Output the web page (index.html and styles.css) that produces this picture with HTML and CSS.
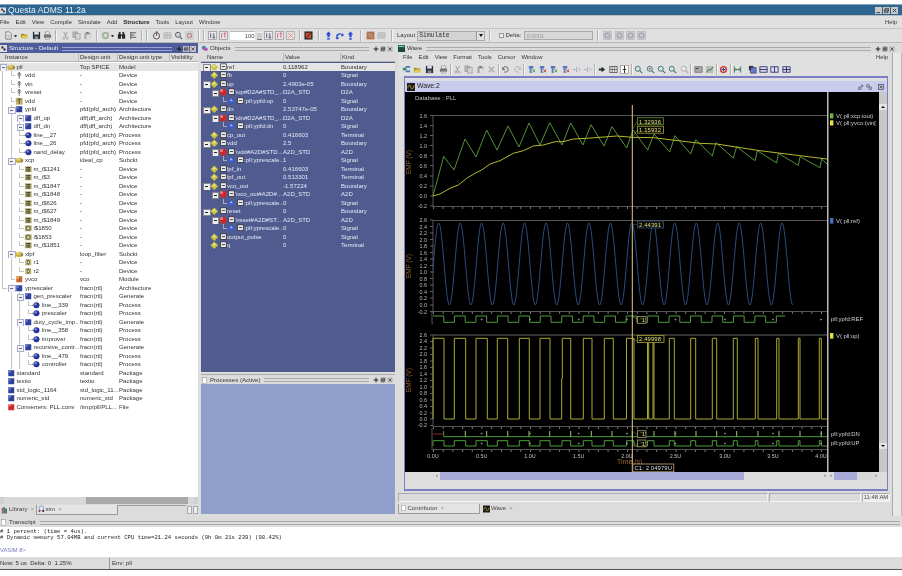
FILE: index.html
```html
<!DOCTYPE html>
<html lang="en">
<head>
<meta charset="utf-8">
<title>Questa ADMS 11.2a</title>
<link rel="stylesheet" href="styles.css">
</head>
<body>
<svg class="sprite" aria-hidden="true">
<defs>
<symbol id="chip" viewBox="0 0 10 10"><ellipse cx="5" cy="5.2" rx="4.6" ry="3" fill="#c9b13e"/><ellipse cx="4" cy="4" rx="2.4" ry="1.3" fill="#e6d678"/><rect x="7" y="4" width="2.6" height="3" fill="#8b8b70"/></symbol>
<symbol id="arch" viewBox="0 0 10 10"><rect x="1.5" y="1.5" width="7" height="7" fill="#2f3f9c"/><rect x="1.5" y="1.5" width="3" height="3" fill="#6b78c4"/></symbol>
<symbol id="ball" viewBox="0 0 10 10"><circle cx="5.2" cy="5" r="3.6" fill="#24349a"/><circle cx="4.2" cy="3.8" r="1.4" fill="#7c88d4"/><rect x="0" y="4.5" width="2" height="1" fill="#666"/></symbol>
<symbol id="dev" viewBox="0 0 10 10"><path d="M5 2v7M3 4l2-2.5L7 4M3.4 5h3.2" fill="none" stroke="#555" stroke-width="1"/></symbol>
<symbol id="devb" viewBox="0 0 10 10"><rect x="1" y="1" width="8" height="8" fill="#bcb26a"/><path d="M5 2v6M3 4l2-2 2 2" fill="none" stroke="#443" stroke-width="1"/></symbol>
<symbol id="mos" viewBox="0 0 10 10"><rect x="1" y="1.5" width="8" height="7" fill="#b8b070"/><path d="M2.5 3h5M2.5 5h3M2.5 7h5M6 3v4" stroke="#333" stroke-width="1"/></symbol>
<symbol id="src" viewBox="0 0 10 10"><rect x="1" y="1.5" width="8" height="7" fill="#b8b070"/><circle cx="5" cy="5" r="2.3" fill="#d8d0a0" stroke="#333" stroke-width=".9"/></symbol>
<symbol id="res" viewBox="0 0 10 10"><rect x="1.5" y="1.5" width="7" height="7" fill="#bcb26a"/><path d="M5 2v1.5M5 6.5V8" stroke="#333"/><rect x="3.8" y="3.5" width="2.4" height="3" fill="#eee" stroke="#333" stroke-width=".6"/></symbol>
<symbol id="mod" viewBox="0 0 10 10"><rect x="1.5" y="1.5" width="7" height="7" fill="#c8642a"/><rect x="1.5" y="1.5" width="3" height="3" fill="#e8b060"/></symbol>
<symbol id="file" viewBox="0 0 10 10"><rect x="1.5" y="1.5" width="7" height="7" fill="#d62a2a"/><rect x="1.5" y="1.5" width="3" height="2" fill="#f08a7a"/></symbol>
<symbol id="dia" viewBox="0 0 10 10"><path d="M5 .5 9.5 5 5 9.5 .5 5z" fill="#c8c040"/><path d="M5 2 7 5H3z" fill="#f0ec9a"/></symbol>
<symbol id="diab" viewBox="0 0 10 10"><path d="M5 .5 9.5 5 5 9.5 .5 5z" fill="#3a5ad0"/><path d="M5 2 7 5H3z" fill="#9ab4f0"/></symbol>
<symbol id="red" viewBox="0 0 10 10"><rect x="1.5" y="1.5" width="7" height="7" fill="#d62424"/><rect x="1.5" y="1.5" width="3" height="3" fill="#ee8a8a"/></symbol>
<symbol id="sq" viewBox="0 0 10 10"><rect x="2" y="1" width="6.5" height="6.5" fill="#eee" stroke="#222" stroke-width=".8"/><path d="M3.5 4.2h3.5" stroke="#222" stroke-width="1"/></symbol>
<symbol id="doc" viewBox="0 0 10 10"><path d="M2 1h4l2 2v6H2z" fill="#f4f4f4" stroke="#555" stroke-width=".8"/><path d="M3.5 4.5h3M3.5 6.5h3" stroke="#777" stroke-width=".7"/></symbol>
<symbol id="open" viewBox="0 0 10 10"><path d="M1 3h3l1 1h3v4H1z" fill="#a09030"/><path d="M1 8l1.5-3H9.5L8 8z" fill="#e0c850"/></symbol>
<symbol id="save" viewBox="0 0 10 10"><rect x="1" y="1" width="8" height="8" fill="#2a3038"/><rect x="2.5" y="1" width="5" height="3" fill="#dde"/><rect x="3" y="6" width="4" height="3" fill="#889"/></symbol>
<symbol id="print" viewBox="0 0 10 10"><rect x="3" y="1" width="4" height="3" fill="#eee" stroke="#777" stroke-width=".6"/><rect x="1" y="4" width="8" height="3.5" fill="#777"/><rect x="2.5" y="7" width="5" height="2" fill="#ddd" stroke="#777" stroke-width=".5"/></symbol>
<symbol id="cut" viewBox="0 0 10 10"><path d="M3 1l3 6M7 1 4 7" stroke="#999" fill="none"/><circle cx="3.2" cy="8" r="1.2" fill="none" stroke="#aaa"/><circle cx="6.8" cy="8" r="1.2" fill="none" stroke="#aaa"/></symbol>
<symbol id="copy" viewBox="0 0 10 10"><rect x="1" y="1" width="5" height="6" fill="#bbb" stroke="#888" stroke-width=".6"/><rect x="4" y="3" width="5" height="6" fill="#d4d4d4" stroke="#888" stroke-width=".6"/></symbol>
<symbol id="paste" viewBox="0 0 10 10"><rect x="1.5" y="2" width="7" height="7" fill="#aaa"/><rect x="3.5" y="1" width="3" height="2" fill="#777"/><rect x="4" y="4" width="4.5" height="5" fill="#ddd"/></symbol>
<symbol id="x" viewBox="0 0 10 10"><path d="M2 2l6 6M8 2l-6 6" stroke="#aaa" stroke-width="1.4"/></symbol>
<symbol id="go" viewBox="0 0 10 10"><circle cx="5" cy="5" r="3.8" fill="#a8c0a0" stroke="#999" stroke-width=".6"/><circle cx="5" cy="5" r="1.6" fill="#dce8d8"/></symbol>
<symbol id="find" viewBox="0 0 10 10"><rect x="1" y="3.5" width="3.4" height="5" fill="#222"/><rect x="5.6" y="3.5" width="3.4" height="5" fill="#222"/><rect x="2" y="1" width="2" height="3" fill="#333"/><rect x="6" y="1" width="2" height="3" fill="#333"/><rect x="4" y="4" width="2" height="1.5" fill="#333"/></symbol>
<symbol id="list" viewBox="0 0 10 10"><path d="M2 1v8M2 2h6M2 4.5h4M2 7h6" stroke="#555" stroke-width="1"/></symbol>
<symbol id="clock" viewBox="0 0 10 10"><circle cx="5" cy="5.5" r="3.4" fill="#e4e4e4" stroke="#444"/><path d="M5 5.5V3" stroke="#a33"/><rect x="4" y=".5" width="2" height="1.5" fill="#444"/></symbol>
<symbol id="ghost" viewBox="0 0 10 10"><rect x="1" y="2" width="8" height="6" fill="#d0d0d0" stroke="#aaa" stroke-width=".6"/><path d="M2.5 2v6M5 2v6M7.5 2v6M1 5h8" stroke="#aaa" stroke-width=".5"/></symbol>
<symbol id="lens" viewBox="0 0 10 10"><circle cx="4.4" cy="4.2" r="2.8" fill="#cfd3dc" stroke="#555"/><path d="M6.5 6.5l2.6 2.6" stroke="#555" stroke-width="1.2"/></symbol>
<symbol id="lensr" viewBox="0 0 10 10"><rect x="1" y="1" width="8" height="8" fill="#d8d8d8" stroke="#aaa" stroke-width=".5"/><path d="M3 3h4v4H3z" fill="none" stroke="#b07070"/></symbol>
<symbol id="tb1" viewBox="0 0 10 10"><rect x=".5" y=".5" width="9" height="9" fill="#e8e8f0" stroke="#888" stroke-width=".7"/><path d="M3 2.5v5M6.5 2.5v5M5 7l1.5 1L8 7" stroke="#335" fill="none" stroke-width=".9"/></symbol>
<symbol id="tb2" viewBox="0 0 10 10"><rect x=".5" y=".5" width="9" height="9" fill="#e8e8f0" stroke="#888" stroke-width=".7"/><path d="M3 2.5v5M6.5 2.5v5M5 3l1.5-1L8 3" stroke="#c44" fill="none" stroke-width=".9"/></symbol>
<symbol id="tb3" viewBox="0 0 10 10"><rect x=".5" y=".5" width="9" height="9" fill="#e8e0e0" stroke="#999" stroke-width=".7"/><path d="M2.5 2.5l5 5M7.5 2.5l-5 5" stroke="#c88" stroke-width=".9"/></symbol>
<symbol id="stop" viewBox="0 0 10 10"><rect x=".5" y=".5" width="9" height="9" fill="#2a2a2a"/><rect x="2" y="2" width="6" height="6" fill="#d24a24"/><path d="M2.5 8l5-6" stroke="#222"/></symbol>
<symbol id="aup" viewBox="0 0 10 10"><path d="M5 .5 8 4H6.3v3H3.7V4H2z" fill="#2a4ad8"/><rect x="3.5" y="8" width="3" height="1.6" fill="#2a4ad8"/></symbol>
<symbol id="aov" viewBox="0 0 10 10"><path d="M1 6a4 4 0 0 1 7-2V2l2 3-3 1.5L7.5 5A2.5 2.5 0 0 0 3 7z" fill="#2a4ad8"/><rect x="1" y="7" width="3" height="2" fill="#2a4ad8"/></symbol>
<symbol id="ostop" viewBox="0 0 10 10"><rect x=".5" y=".5" width="9" height="9" fill="#c89070"/><path d="M2 8l6-6" stroke="#888" stroke-width="1.2"/><rect x="2" y="2" width="6" height="6" fill="none" stroke="#b06030"/></symbol>
<symbol id="gear" viewBox="0 0 10 10"><rect x=".5" y=".5" width="9" height="9" fill="#c8c8d0" stroke="#aaa" stroke-width=".5"/><circle cx="5" cy="5" r="2.6" fill="none" stroke="#8a8f98" stroke-width="1.3" stroke-dasharray="1.2 .6"/></symbol>
<symbol id="wblue" viewBox="0 0 10 10"><rect x="1" y="3" width="4" height="3" fill="#3a8a70"/><path d="M4 1h5v2H4zM4 6h5v2H4z" fill="#4a78b8"/></symbol>
<symbol id="addw" viewBox="0 0 10 10"><path d="M2 1h5v3H5v5H3V4H2z" fill="#5a78c0"/><path d="M6 5l3 3M9 5 6 8" stroke="#38a038" stroke-width="1.1"/></symbol>
<symbol id="delw" viewBox="0 0 10 10"><path d="M2 1h5v3H5v5H3V4H2z" fill="#5a78c0"/><path d="M6 5l3 3M9 5 6 8" stroke="#c83030" stroke-width="1.1"/></symbol>
<symbol id="gstep" viewBox="0 0 10 10"><path d="M1 5h4M5 2v6M7 3l2 2-2 2" stroke="#aab" fill="none" stroke-width="1"/></symbol>
<symbol id="undo" viewBox="0 0 10 10"><path d="M2 5a3 3 0 1 1 1.5 2.5M2 2.5V5h2.5" fill="none" stroke="#556" stroke-width="1"/></symbol>
<symbol id="redo" viewBox="0 0 10 10"><path d="M8 5a3 3 0 1 0-1.5 2.5M8 2.5V5H5.5" fill="none" stroke="#aab" stroke-width="1"/></symbol>
<symbol id="run" viewBox="0 0 10 10"><path d="M1 4h3V2l4 3-4 3V6H1z" fill="#1f3030"/></symbol>
<symbol id="grid" viewBox="0 0 10 10"><rect x="1" y="1.5" width="8" height="7" fill="#eee" stroke="#444" stroke-width=".8"/><path d="M3.6 1.5v7M6.3 1.5v7M1 5h8" stroke="#444" stroke-width=".7"/></symbol>
<symbol id="curs" viewBox="0 0 10 10"><rect x=".5" y=".5" width="9" height="9" fill="#fff" stroke="#987" stroke-width=".7"/><path d="M5 1v8M3 5h4" stroke="#222"/></symbol>
<symbol id="zoom" viewBox="0 0 10 10"><circle cx="4.2" cy="4.2" r="2.8" fill="#cfe0ea" stroke="#3f6f6a"/><path d="M6.3 6.3l2.8 2.8" stroke="#3f6f6a" stroke-width="1.2"/></symbol>
<symbol id="zoomp" viewBox="0 0 10 10"><circle cx="4.2" cy="4.2" r="2.8" fill="#cfe0ea" stroke="#3f6f6a"/><path d="M6.3 6.3l2.8 2.8" stroke="#3f6f6a" stroke-width="1.2"/><path d="M3 4.2h2.4M4.2 3v2.4" stroke="#a33" stroke-width=".7"/></symbol>
<symbol id="zoomg" viewBox="0 0 10 10"><circle cx="4.2" cy="4.2" r="2.8" fill="#e8e8e8" stroke="#aaa"/><path d="M6.3 6.3l2.8 2.8" stroke="#aaa" stroke-width="1.2"/></symbol>
<symbol id="card" viewBox="0 0 10 10"><rect x="1" y="2" width="8" height="6" fill="#aaa" stroke="#555" stroke-width=".7"/><path d="M2 4h3" stroke="#333"/></symbol>
<symbol id="graph" viewBox="0 0 10 10"><rect x="1" y="1" width="8" height="8" fill="#b8c0a8"/><path d="M2 8l2-3 2 1 3-4" stroke="#2a5a9a" fill="none"/></symbol>
<symbol id="cyc" viewBox="0 0 10 10"><circle cx="5" cy="5" r="3.2" fill="none" stroke="#d03020" stroke-width="1.5"/><path d="M5 3v4M3 5h4" stroke="#2a3a9a" stroke-width="1.1"/></symbol>
<symbol id="hw" viewBox="0 0 10 10"><path d="M1.5 1.5v7M8.5 1.5v7M2.5 5h5M3.5 3.5 2 5l1.5 1.5M6.5 3.5 8 5 6.5 6.5" stroke="#2a6a4a" fill="none" stroke-width=".9"/></symbol>
<symbol id="wa" viewBox="0 0 10 10"><rect x="1" y="1" width="5" height="5" fill="#335" /><rect x="3" y="3" width="6" height="6" fill="#6a78d0" stroke="#224" stroke-width=".6"/></symbol>
<symbol id="wb" viewBox="0 0 10 10"><rect x="1" y="2" width="8" height="6" fill="#dde" stroke="#226" stroke-width=".9"/><path d="M1 5h8" stroke="#226"/></symbol>
<symbol id="wc" viewBox="0 0 10 10"><rect x="1" y="2" width="8" height="6" fill="#dde" stroke="#226" stroke-width=".9"/><path d="M5 2v6" stroke="#226"/></symbol>
<symbol id="wd" viewBox="0 0 10 10"><rect x="1" y="2" width="8" height="6" fill="#dde" stroke="#226" stroke-width=".9"/><path d="M5 2v6M1 5h8" stroke="#226"/></symbol>
<symbol id="waveic" viewBox="0 0 10 10"><rect width="10" height="10" fill="#1c1c1c"/><path d="M1 6c2-6 3-3 4 0s3 1 4-3" fill="none" stroke="#d8b020"/></symbol>
<symbol id="wicon" viewBox="0 0 10 10"><rect width="10" height="10" fill="#204838"/><rect x="1" y="1" width="8" height="2" fill="#7ad0a0"/></symbol>
<symbol id="obj" viewBox="0 0 10 10"><circle cx="4" cy="4" r="3" fill="#3c8ab0"/><circle cx="7" cy="6" r="2.6" fill="#c04ab0"/></symbol>
<symbol id="lib" viewBox="0 0 10 10"><rect x="1" y="2" width="2" height="8" fill="#b06030"/><rect x="3.5" y="1" width="2" height="9" fill="#2a50a0"/><rect x="6" y="3" width="2.5" height="7" fill="#3a7a3a"/></symbol>
<symbol id="sim" viewBox="0 0 10 10"><circle cx="5" cy="4" r="3.4" fill="#dfe6f4" stroke="#4a5ea0" stroke-width=".7"/><circle cx="2" cy="8" r="1.5" fill="#c03030"/><circle cx="7.5" cy="8" r="1.5" fill="#303030"/></symbol>
<symbol id="page" viewBox="0 0 10 10"><rect x="2" y="1" width="6" height="8" fill="#fff" stroke="#888" stroke-width=".7"/></symbol>
<symbol id="winb" viewBox="0 0 10 10"><rect width="10" height="10" fill="#c8c8c8"/><path d="M2 8h5" stroke="#222" stroke-width="1.2"/></symbol>
<symbol id="winm" viewBox="0 0 10 10"><rect width="10" height="10" fill="#c8c8c8"/><path d="M3 2h5v4H3zM2 4h5v4H2z" fill="none" stroke="#222" stroke-width=".9"/></symbol>
<symbol id="winx" viewBox="0 0 10 10"><rect width="10" height="10" fill="#c8c8c8"/><path d="M2.5 2.5l5 5M7.5 2.5l-5 5" stroke="#222" stroke-width="1.1"/></symbol>
<symbol id="pinp" viewBox="0 0 10 10"><path d="M5 1v8M1 5h8" stroke="#111" stroke-width="1.5"/></symbol>
<symbol id="titl" viewBox="0 0 10 10"><rect width="10" height="10" fill="#ddd"/><path d="M2 2h3v3H2zM5 5h3v3H5z" fill="#223"/></symbol>
<symbol id="dockl" viewBox="0 0 10 10"><path d="M1 9V5h4v4zM5 5l3-3M5 2h3v3" fill="none" stroke="#444" stroke-width="1"/></symbol>
<symbol id="dockr" viewBox="0 0 10 10"><path d="M5 9V5h4v4zM1 1h4v4H1z" fill="none" stroke="#444" stroke-width="1"/></symbol>
<symbol id="subx" viewBox="0 0 10 10"><rect x="1" y="1" width="8" height="8" fill="#bbb" stroke="#335" stroke-width="1"/><path d="M3 3l4 4M7 3 3 7" stroke="#335"/></symbol>
</defs>
</svg>

<div class="screen">
<div class="topgap"></div>
<div class="title"><svg class="ti"><use href="#titl"/></svg><span class="ttext">Questa ADMS 11.2a</span><span class="wbtns"><svg><use href="#winb"/></svg><svg><use href="#winm"/></svg><svg><use href="#winx"/></svg></span></div>

<div class="menu"><span>File</span><span>Edit</span><span>View</span><span>Compile</span><span>Simulate</span><span>Add</span><span class="bold">Structure</span><span>Tools</span><span>Layout</span><span>Window</span><span class="push">Help</span></div>

<div class="toolbar">
<svg class="tb"><use href="#doc"/></svg><span class="drop"></span><svg class="tb"><use href="#open"/></svg><svg class="tb"><use href="#save"/></svg><svg class="tb"><use href="#print"/></svg><span class="sep"></span><svg class="tb"><use href="#cut"/></svg><svg class="tb"><use href="#copy"/></svg><svg class="tb"><use href="#paste"/></svg><span class="sep"></span><svg class="tb"><use href="#go"/></svg><span class="drop"></span><svg class="tb"><use href="#find"/></svg><svg class="tb"><use href="#list"/></svg><span class="sep"></span><span class="sep s2"></span><svg class="tb"><use href="#clock"/></svg><svg class="tb"><use href="#ghost"/></svg><svg class="tb"><use href="#lens"/></svg><svg class="tb"><use href="#lensr"/></svg><span class="sep"></span><span class="sep s2"></span><svg class="tb"><use href="#tb1"/></svg><svg class="tb"><use href="#tb2"/></svg><span class="num">100</span><span class="spin"></span><svg class="tb"><use href="#tb1"/></svg><svg class="tb"><use href="#tb2"/></svg><svg class="tb"><use href="#tb3"/></svg><span class="sep"></span><svg class="tb"><use href="#stop"/></svg><span class="sep s3"></span><svg class="tb"><use href="#aup"/></svg><svg class="tb"><use href="#aov"/></svg><svg class="tb"><use href="#aup"/></svg><span class="sep s3"></span><svg class="tb"><use href="#ostop"/></svg><svg class="tb"><use href="#ghost"/></svg><span class="sep s3"></span>
<span class="lay">Layout</span><span class="combo">Simulate<span class="cbtn"></span></span><span class="sep"></span><span class="chk"></span><span class="dl">Delta:</span><span class="dfield">0.0001</span><span class="sep"></span><svg class="tb g1"><use href="#gear"/></svg><svg class="tb"><use href="#gear"/></svg><svg class="tb"><use href="#gear"/></svg><svg class="tb"><use href="#gear"/></svg>
</div>

<div class="main">
<section class="struct">
<header class="phead active"><svg class="pi"><use href="#titl"/></svg><span>Structure - Default</span><i class="grip"></i><span class="pbtn"><svg><use href="#pinp"/></svg><svg><use href="#winm"/></svg><svg><use href="#winx"/></svg></span></header>
<div class="cols"><span class="c1">Instance</span><span class="c2">Design unit</span><span class="c3">Design unit type</span><span class="c4">Visibility</span></div>
<div class="tree">
<div class="r sel"><span class="n"><i class="x"></i><svg class="ic"><use href="#chip"/></svg><span class="tx">pll</span></span><span class="u">Top SPICE</span><span class="t">Model</span></div>
<div class="r"><span class="n"><i class="g"></i><i class="e"></i><svg class="ic"><use href="#dev"/></svg><span class="tx">vdd</span></span><span class="u">-</span><span class="t">Device</span></div>
<div class="r"><span class="n"><i class="g"></i><i class="e"></i><svg class="ic"><use href="#dev"/></svg><span class="tx">vin</span></span><span class="u">-</span><span class="t">Device</span></div>
<div class="r"><span class="n"><i class="g"></i><i class="e"></i><svg class="ic"><use href="#dev"/></svg><span class="tx">vreset</span></span><span class="u">-</span><span class="t">Device</span></div>
<div class="r"><span class="n"><i class="g"></i><i class="e"></i><svg class="ic"><use href="#devb"/></svg><span class="tx">vdd</span></span><span class="u">-</span><span class="t">Device</span></div>
<div class="r"><span class="n"><i class="g"></i><i class="x"></i><svg class="ic"><use href="#arch"/></svg><span class="tx">ypfd</span></span><span class="u">pfd(pfd_arch)</span><span class="t">Architecture</span></div>
<div class="r"><span class="n"><i class="g"></i><i class="g"></i><i class="x"></i><svg class="ic"><use href="#arch"/></svg><span class="tx">dff_up</span></span><span class="u">dff(dff_arch)</span><span class="t">Architecture</span></div>
<div class="r"><span class="n"><i class="g"></i><i class="g"></i><i class="x"></i><svg class="ic"><use href="#arch"/></svg><span class="tx">dff_dn</span></span><span class="u">dff(dff_arch)</span><span class="t">Architecture</span></div>
<div class="r"><span class="n"><i class="g"></i><i class="g"></i><i class="e"></i><svg class="ic"><use href="#ball"/></svg><span class="tx">line__27</span></span><span class="u">pfd(pfd_arch)</span><span class="t">Process</span></div>
<div class="r"><span class="n"><i class="g"></i><i class="g"></i><i class="e"></i><svg class="ic"><use href="#ball"/></svg><span class="tx">line__26</span></span><span class="u">pfd(pfd_arch)</span><span class="t">Process</span></div>
<div class="r"><span class="n"><i class="g"></i><i class="g"></i><i class="e"></i><svg class="ic"><use href="#ball"/></svg><span class="tx">nand_delay</span></span><span class="u">pfd(pfd_arch)</span><span class="t">Process</span></div>
<div class="r"><span class="n"><i class="g"></i><i class="x"></i><svg class="ic"><use href="#chip"/></svg><span class="tx">xcp</span></span><span class="u">ideal_cp</span><span class="t">Subckt</span></div>
<div class="r"><span class="n"><i class="g"></i><i class="g"></i><i class="e"></i><svg class="ic"><use href="#mos"/></svg><span class="tx">m_i$1241</span></span><span class="u">-</span><span class="t">Device</span></div>
<div class="r"><span class="n"><i class="g"></i><i class="g"></i><i class="e"></i><svg class="ic"><use href="#mos"/></svg><span class="tx">m_i$3</span></span><span class="u">-</span><span class="t">Device</span></div>
<div class="r"><span class="n"><i class="g"></i><i class="g"></i><i class="e"></i><svg class="ic"><use href="#mos"/></svg><span class="tx">m_i$1847</span></span><span class="u">-</span><span class="t">Device</span></div>
<div class="r"><span class="n"><i class="g"></i><i class="g"></i><i class="e"></i><svg class="ic"><use href="#mos"/></svg><span class="tx">m_i$1848</span></span><span class="u">-</span><span class="t">Device</span></div>
<div class="r"><span class="n"><i class="g"></i><i class="g"></i><i class="e"></i><svg class="ic"><use href="#mos"/></svg><span class="tx">m_i$626</span></span><span class="u">-</span><span class="t">Device</span></div>
<div class="r"><span class="n"><i class="g"></i><i class="g"></i><i class="e"></i><svg class="ic"><use href="#mos"/></svg><span class="tx">m_i$627</span></span><span class="u">-</span><span class="t">Device</span></div>
<div class="r"><span class="n"><i class="g"></i><i class="g"></i><i class="e"></i><svg class="ic"><use href="#mos"/></svg><span class="tx">m_i$1849</span></span><span class="u">-</span><span class="t">Device</span></div>
<div class="r"><span class="n"><i class="g"></i><i class="g"></i><i class="e"></i><svg class="ic"><use href="#src"/></svg><span class="tx">i$1850</span></span><span class="u">-</span><span class="t">Device</span></div>
<div class="r"><span class="n"><i class="g"></i><i class="g"></i><i class="e"></i><svg class="ic"><use href="#src"/></svg><span class="tx">i$1853</span></span><span class="u">-</span><span class="t">Device</span></div>
<div class="r"><span class="n"><i class="g"></i><i class="g"></i><i class="e"></i><svg class="ic"><use href="#mos"/></svg><span class="tx">m_i$1851</span></span><span class="u">-</span><span class="t">Device</span></div>
<div class="r"><span class="n"><i class="g"></i><i class="x"></i><svg class="ic"><use href="#chip"/></svg><span class="tx">xlpf</span></span><span class="u">loop_filter</span><span class="t">Subckt</span></div>
<div class="r"><span class="n"><i class="g"></i><i class="g"></i><i class="e"></i><svg class="ic"><use href="#res"/></svg><span class="tx">r1</span></span><span class="u">-</span><span class="t">Device</span></div>
<div class="r"><span class="n"><i class="g"></i><i class="g"></i><i class="e"></i><svg class="ic"><use href="#res"/></svg><span class="tx">r2</span></span><span class="u">-</span><span class="t">Device</span></div>
<div class="r"><span class="n"><i class="g"></i><i class="e"></i><svg class="ic"><use href="#mod"/></svg><span class="tx">yvco</span></span><span class="u">vco</span><span class="t">Module</span></div>
<div class="r"><span class="n"><i class="e0"></i><i class="x"></i><svg class="ic"><use href="#arch"/></svg><span class="tx">yprescaler</span></span><span class="u">fracn(rtl)</span><span class="t">Architecture</span></div>
<div class="r"><span class="n"><i class="b"></i><i class="g"></i><i class="x"></i><svg class="ic"><use href="#arch"/></svg><span class="tx">gen_prescaler</span></span><span class="u">fracn(rtl)</span><span class="t">Generate</span></div>
<div class="r"><span class="n"><i class="b"></i><i class="g"></i><i class="g"></i><i class="e"></i><svg class="ic"><use href="#ball"/></svg><span class="tx">line__339</span></span><span class="u">fracn(rtl)</span><span class="t">Process</span></div>
<div class="r"><span class="n"><i class="b"></i><i class="g"></i><i class="g"></i><i class="e"></i><svg class="ic"><use href="#ball"/></svg><span class="tx">prescaler</span></span><span class="u">fracn(rtl)</span><span class="t">Process</span></div>
<div class="r"><span class="n"><i class="b"></i><i class="g"></i><i class="x"></i><svg class="ic"><use href="#arch"/></svg><span class="tx">duty_cycle_imp...</span></span><span class="u">fracn(rtl)</span><span class="t">Generate</span></div>
<div class="r"><span class="n"><i class="b"></i><i class="g"></i><i class="g"></i><i class="e"></i><svg class="ic"><use href="#ball"/></svg><span class="tx">line__358</span></span><span class="u">fracn(rtl)</span><span class="t">Process</span></div>
<div class="r"><span class="n"><i class="b"></i><i class="g"></i><i class="g"></i><i class="e"></i><svg class="ic"><use href="#ball"/></svg><span class="tx">improver</span></span><span class="u">fracn(rtl)</span><span class="t">Process</span></div>
<div class="r"><span class="n"><i class="b"></i><i class="g"></i><i class="x"></i><svg class="ic"><use href="#arch"/></svg><span class="tx">recursive_contr...</span></span><span class="u">fracn(rtl)</span><span class="t">Generate</span></div>
<div class="r"><span class="n"><i class="b"></i><i class="g"></i><i class="g"></i><i class="e"></i><svg class="ic"><use href="#ball"/></svg><span class="tx">line__479</span></span><span class="u">fracn(rtl)</span><span class="t">Process</span></div>
<div class="r"><span class="n"><i class="b"></i><i class="g"></i><i class="g"></i><i class="e"></i><svg class="ic"><use href="#ball"/></svg><span class="tx">controller</span></span><span class="u">fracn(rtl)</span><span class="t">Process</span></div>
<div class="r"><span class="n"><i class="b"></i><svg class="ic"><use href="#arch"/></svg><span class="tx">standard</span></span><span class="u">standard</span><span class="t">Package</span></div>
<div class="r"><span class="n"><i class="b"></i><svg class="ic"><use href="#arch"/></svg><span class="tx">textio</span></span><span class="u">textio</span><span class="t">Package</span></div>
<div class="r"><span class="n"><i class="b"></i><svg class="ic"><use href="#arch"/></svg><span class="tx">std_logic_1164</span></span><span class="u">std_logic_11...</span><span class="t">Package</span></div>
<div class="r"><span class="n"><i class="b"></i><svg class="ic"><use href="#arch"/></svg><span class="tx">numeric_std</span></span><span class="u">numeric_std</span><span class="t">Package</span></div>
<div class="r"><span class="n"><i class="b"></i><svg class="ic"><use href="#file"/></svg><span class="tx">Converters: PLL.conv</span></span><span class="u">/tmp/pll/PLL...</span><span class="t">File</span></div>
</div>
<div class="hs"><i class="sa"></i><i class="st"></i><i class="sth"></i><i class="st2"></i><i class="sa"></i></div>
<div class="tabs"><span class="tab"><svg><use href="#lib"/></svg>Library<b>×</b></span><span class="tab on"><svg><use href="#sim"/></svg>sim<b>×</b></span><i class="tabfill"></i><i class="tarrow"></i><i class="tarrow"></i></div>
</section>

<section class="objs">
<header class="phead"><svg class="pi"><use href="#obj"/></svg><span>Objects</span><i class="grip"></i><span class="pbtn"><svg><use href="#pinp"/></svg><svg><use href="#winm"/></svg><svg><use href="#winx"/></svg></span></header>
<div class="cols oc"><span class="o1">Name</span><span class="o2">Value</span><span class="o3">Kind</span></div>
<div class="olist">
<div class="o sel"><span class="on"><i class="xo"></i><svg class="ic"><use href="#dia"/></svg><svg class="ic"><use href="#sq"/></svg><span>ref</span></span><span class="ov">0.118962</span><span>Boundary</span></div>
<div class="o"><span class="on"><i class="bk"></i><svg class="ic"><use href="#dia"/></svg><svg class="ic"><use href="#sq"/></svg><span>fb</span></span><span class="ov">0</span><span>Signal</span></div>
<div class="o"><span class="on"><i class="xo"></i><svg class="ic"><use href="#dia"/></svg><svg class="ic"><use href="#sq"/></svg><span>up</span></span><span class="ov">2.4903e-05</span><span>Boundary</span></div>
<div class="o"><span class="on"><i class="bk"></i><i class="xo"></i><svg class="ic"><use href="#red"/></svg><svg class="ic"><use href="#sq"/></svg><span>\up#D2A#STD_...</span></span><span class="ov">D2A_STD</span><span>D2A</span></div>
<div class="o"><span class="on"><i class="bk"></i><i class="bk"></i><i class="eo"></i><svg class="ic"><use href="#diab"/></svg><svg class="ic"><use href="#sq"/></svg><span>:pll:ypfd:up</span></span><span class="ov">0</span><span>Signal</span></div>
<div class="o"><span class="on"><i class="xo"></i><svg class="ic"><use href="#dia"/></svg><svg class="ic"><use href="#sq"/></svg><span>dn</span></span><span class="ov">2.53747e-05</span><span>Boundary</span></div>
<div class="o"><span class="on"><i class="bk"></i><i class="xo"></i><svg class="ic"><use href="#red"/></svg><svg class="ic"><use href="#sq"/></svg><span>\dn#D2A#STD_...</span></span><span class="ov">D2A_STD</span><span>D2A</span></div>
<div class="o"><span class="on"><i class="bk"></i><i class="bk"></i><i class="eo"></i><svg class="ic"><use href="#diab"/></svg><svg class="ic"><use href="#sq"/></svg><span>:pll:ypfd:dn</span></span><span class="ov">0</span><span>Signal</span></div>
<div class="o"><span class="on"><i class="bk"></i><svg class="ic"><use href="#dia"/></svg><svg class="ic"><use href="#sq"/></svg><span>cp_out</span></span><span class="ov">0.416603</span><span>Terminal</span></div>
<div class="o"><span class="on"><i class="xo"></i><svg class="ic"><use href="#dia"/></svg><svg class="ic"><use href="#sq"/></svg><span>vdd</span></span><span class="ov">2.5</span><span>Boundary</span></div>
<div class="o"><span class="on"><i class="bk"></i><i class="xo"></i><svg class="ic"><use href="#red"/></svg><svg class="ic"><use href="#sq"/></svg><span>\vdd#A2D#STD...</span></span><span class="ov">A2D_STD</span><span>A2D</span></div>
<div class="o"><span class="on"><i class="bk"></i><i class="bk"></i><i class="eo"></i><svg class="ic"><use href="#diab"/></svg><svg class="ic"><use href="#sq"/></svg><span>:pll:yprescale...</span></span><span class="ov">1</span><span>Signal</span></div>
<div class="o"><span class="on"><i class="bk"></i><svg class="ic"><use href="#dia"/></svg><svg class="ic"><use href="#sq"/></svg><span>lpf_in</span></span><span class="ov">0.416603</span><span>Terminal</span></div>
<div class="o"><span class="on"><i class="bk"></i><svg class="ic"><use href="#dia"/></svg><svg class="ic"><use href="#sq"/></svg><span>lpf_out</span></span><span class="ov">0.513301</span><span>Terminal</span></div>
<div class="o"><span class="on"><i class="xo"></i><svg class="ic"><use href="#dia"/></svg><svg class="ic"><use href="#sq"/></svg><span>vco_out</span></span><span class="ov">-1.57224</span><span>Boundary</span></div>
<div class="o"><span class="on"><i class="bk"></i><i class="xo"></i><svg class="ic"><use href="#red"/></svg><svg class="ic"><use href="#sq"/></svg><span>\vco_out#A2D#...</span></span><span class="ov">A2D_STD</span><span>A2D</span></div>
<div class="o"><span class="on"><i class="bk"></i><i class="bk"></i><i class="eo"></i><svg class="ic"><use href="#diab"/></svg><svg class="ic"><use href="#sq"/></svg><span>:pll:yprescale...</span></span><span class="ov">0</span><span>Signal</span></div>
<div class="o"><span class="on"><i class="xo"></i><svg class="ic"><use href="#dia"/></svg><svg class="ic"><use href="#sq"/></svg><span>reset</span></span><span class="ov">0</span><span>Boundary</span></div>
<div class="o"><span class="on"><i class="bk"></i><i class="xo"></i><svg class="ic"><use href="#red"/></svg><svg class="ic"><use href="#sq"/></svg><span>\reset#A2D#ST...</span></span><span class="ov">A2D_STD</span><span>A2D</span></div>
<div class="o"><span class="on"><i class="bk"></i><i class="bk"></i><i class="eo"></i><svg class="ic"><use href="#diab"/></svg><svg class="ic"><use href="#sq"/></svg><span>:pll:yprescale...</span></span><span class="ov">0</span><span>Signal</span></div>
<div class="o"><span class="on"><i class="bk"></i><svg class="ic"><use href="#dia"/></svg><svg class="ic"><use href="#sq"/></svg><span>output_pulse</span></span><span class="ov">0</span><span>Signal</span></div>
<div class="o"><span class="on"><i class="bk"></i><svg class="ic"><use href="#dia"/></svg><svg class="ic"><use href="#sq"/></svg><span>q</span></span><span class="ov">0</span><span>Terminal</span></div>
</div>
<header class="phead pr"><svg class="pi"><use href="#page"/></svg><span>Processes (Active)</span><i class="grip"></i><span class="pbtn"><svg><use href="#pinp"/></svg><svg><use href="#winm"/></svg><svg><use href="#winx"/></svg></span></header>
<div class="proc"></div>
</section>

<section class="wavecol">
<header class="phead"><svg class="pi"><use href="#wicon"/></svg><span>Wave</span><i class="grip"></i><span class="pbtn"><svg><use href="#pinp"/></svg><svg><use href="#winm"/></svg><svg><use href="#winx"/></svg></span></header>
<div class="wbody">
<div class="wleft">
<div class="menu wm"><span>File</span><span>Edit</span><span>View</span><span>Format</span><span>Tools</span><span>Cursor</span><span>Window</span><span class="push">Help</span></div>
<div class="toolbar wt"><svg class="tb"><use href="#wblue"/></svg><svg class="tb"><use href="#open"/></svg><svg class="tb"><use href="#save"/></svg><svg class="tb m3"><use href="#print"/></svg><span class="sep"></span><svg class="tb"><use href="#cut"/></svg><svg class="tb"><use href="#copy"/></svg><svg class="tb"><use href="#paste"/></svg><svg class="tb"><use href="#x"/></svg><span class="sep"></span><svg class="tb"><use href="#undo"/></svg><svg class="tb"><use href="#redo"/></svg><span class="sep"></span><svg class="tb"><use href="#addw"/></svg><svg class="tb"><use href="#delw"/></svg><svg class="tb"><use href="#addw"/></svg><svg class="tb"><use href="#delw"/></svg><svg class="tb"><use href="#gstep"/></svg><svg class="tb"><use href="#gstep"/></svg><span class="sep"></span><svg class="tb"><use href="#run"/></svg><svg class="tb"><use href="#grid"/></svg><svg class="tb"><use href="#curs"/></svg><span class="sep"></span><svg class="tb"><use href="#zoom"/></svg><svg class="tb"><use href="#zoomp"/></svg><svg class="tb"><use href="#zoom"/></svg><svg class="tb"><use href="#zoom"/></svg><svg class="tb"><use href="#zoomg"/></svg><span class="sep"></span><svg class="tb"><use href="#card"/></svg><svg class="tb"><use href="#graph"/></svg><span class="sep"></span><svg class="tb"><use href="#cyc"/></svg><span class="sep"></span><svg class="tb"><use href="#hw"/></svg><svg class="tb m3"><use href="#wa"/></svg><svg class="tb"><use href="#wb"/></svg><svg class="tb"><use href="#wc"/></svg><svg class="tb"><use href="#wd"/></svg></div>
<div class="sub">
<div class="subtitle"><svg class="si"><use href="#waveic"/></svg><span>Wave:2</span><span class="sbtn"><svg><use href="#dockl"/></svg><svg><use href="#dockr"/></svg><svg class="sbx"><use href="#subx"/></svg></span></div>
<div class="plotrow">
<svg class="plot" viewBox="405 92 474 380">
<rect x="405" y="92" width="474" height="380" fill="#000"/>
<text class="db" x="415" y="100">Database : PLL</text>

<!-- analog pane 1 -->
<path class="grid" d="M433 115.5H827M433 206.5H827M433 115V207"/>
<path class="dash" d="M433 208H827"/>
<path class="tick" d="M430 115.5h3M430 125.5h3M430 135.5h3M430 145.5h3M430 155.5h3M430 165.5h3M430 176h3M430 186h3M430 196h3M430 206h3"/>
<g class="tk"><text x="427" y="117.5">1.6</text><text x="427" y="127.5">1.4</text><text x="427" y="137.5">1.2</text><text x="427" y="147.5">1.0</text><text x="427" y="157.5">0.8</text><text x="427" y="167.5">0.6</text><text x="427" y="178">0.4</text><text x="427" y="188">0.2</text><text x="427" y="198">0.0</text><text x="427" y="208">-0.2</text></g>
<text class="ey" transform="translate(411 162) rotate(-90)">EMF (V)</text>
<polyline class="wg" points="433,196 443.7,156.5 454,170 465,139 476,157 486.7,130 497,150 508,126 519,147 529,123 540,145 549.7,122.7 562,145 570.7,123 583,145 591,124.7 604,146 612,126.7 626.7,148 633,130 647.7,150 654,134 669.7,152 675,135.7 690.7,154 695.7,139.7 712.3,156 716,142.7 733.3,158 736.7,146.7 755,160.7 757.3,150.7 776.7,163 778.3,153.3 798.3,165.3 800,156.7 820,167.7 821.7,159 827,164"/>
<polyline class="wy" points="433,196 440,194 450,188.3 458.3,185 466.7,178.3 475,173.3 481.7,170 490,164 500,160.7 513.3,153.3 523.3,150.7 533.3,146 543.3,145 555,141.7 563.3,141.7 573.3,139 586.7,138.3 600,137.3 616.7,136 632.3,137.3 653.3,137.7 666.7,139.3 686.7,141.7 700,143.3 716.7,144 760,150.7 800,155.7 827,159"/>

<!-- analog pane 2: ref sine -->
<path class="grid" d="M433 220.5H827M433 311.5H827M433 220V312"/>
<path class="dash" d="M433 313H827"/>
<path class="tick" d="M430 220h3M430 226.5h3M430 233h3M430 239.5h3M430 246h3M430 252.5h3M430 259h3M430 265.5h3M430 272h3M430 278.5h3M430 285h3M430 291.5h3M430 298h3M430 305h3M430 311.5h3"/>
<g class="tk"><text x="427" y="222">2.6</text><text x="427" y="228.5">2.4</text><text x="427" y="235">2.2</text><text x="427" y="241.5">2.0</text><text x="427" y="248">1.8</text><text x="427" y="254.5">1.6</text><text x="427" y="261">1.4</text><text x="427" y="267.5">1.2</text><text x="427" y="274">1.0</text><text x="427" y="280.5">0.8</text><text x="427" y="287">0.6</text><text x="427" y="293.5">0.4</text><text x="427" y="300">0.2</text><text x="427" y="307">0.0</text><text x="427" y="313.5">-0.2</text></g>
<text class="ey" transform="translate(411 266) rotate(-90)">EMF (V)</text>
<path class="wb" clip-path="url(#clipw)" d="M428 305c3.9 0 6.83-82 10.73-82s6.83 82 10.73 82s6.83-82 10.73-82s6.83 82 10.73 82s6.83-82 10.73-82s6.83 82 10.73 82s6.83-82 10.73-82s6.83 82 10.73 82s6.83-82 10.73-82s6.83 82 10.73 82s6.83-82 10.73-82s6.83 82 10.73 82s6.83-82 10.73-82s6.83 82 10.73 82s6.83-82 10.73-82s6.83 82 10.73 82s6.83-82 10.73-82s6.83 82 10.73 82s6.83-82 10.73-82s6.83 82 10.73 82s6.83-82 10.73-82s6.83 82 10.73 82s6.83-82 10.73-82s6.83 82 10.73 82s6.83-82 10.73-82s6.83 82 10.73 82s6.83-82 10.73-82s6.83 82 10.73 82s6.83-82 10.73-82s6.83 82 10.73 82s6.83-82 10.73-82s6.83 82 10.73 82s6.83-82 10.73-82s6.83 82 10.73 82"/>
<clipPath id="clipw"><rect x="433" y="100" width="394" height="372"/></clipPath>

<!-- digital REF -->
<path class="grid" d="M432 311.5v12h1"/>
<path class="wd" d="M433 316h10.73v6.3h10.73v-6.3h10.73v6.3h10.73v-6.3h10.73v6.3h10.73v-6.3h10.73v6.3h10.73v-6.3h10.73v6.3h10.73v-6.3h10.73v6.3h10.73v-6.3h10.73v6.3h10.73v-6.3h10.73v6.3h10.73v-6.3h10.73v6.3h10.73v-6.3h10.73v6.3h10.73v-6.3h10.73v6.3h10.73v-6.3h10.73v6.3h10.73v-6.3h10.73v6.3h10.73v-6.3h10.73v6.3h10.73v-6.3h10.73v6.3h10.73v-6.3h10.73v6.3h10.73v-6.3h9"/>

<!-- analog pane 3: up -->
<path class="gridb" d="M433 335H827"/>
<path class="grid" d="M433 426.5H827M433 335V427"/>
<path class="dash" d="M433 428H827"/>
<path class="tick" d="M430 335h3M430 341.5h3M430 348h3M430 354.5h3M430 361h3M430 367.5h3M430 374h3M430 380.5h3M430 387h3M430 393.5h3M430 400h3M430 406.5h3M430 413h3M430 419h3M430 425.5h3"/>
<g class="tk"><text x="427" y="336.5">2.6</text><text x="427" y="343">2.4</text><text x="427" y="349.5">2.2</text><text x="427" y="356">2.0</text><text x="427" y="362.5">1.8</text><text x="427" y="369">1.6</text><text x="427" y="375.5">1.4</text><text x="427" y="382">1.2</text><text x="427" y="388.5">1.0</text><text x="427" y="395">0.8</text><text x="427" y="401.5">0.6</text><text x="427" y="408">0.4</text><text x="427" y="414.5">0.2</text><text x="427" y="421">0.0</text><text x="427" y="427">-0.2</text></g>
<text class="ey" transform="translate(411 380) rotate(-90)">EMF (V)</text>
<path class="wy2" d="M433 419V338.3H444V419H454.3V338.3H465.7V419H476V338.3H487.3V419H497.3V338.3H507.7V419H519.3V338.3H529.3V419H540V338.3H550V419H561.7V379H562.3V338.3H570.7V419H583.3V338.3H592V419H604.3V338.3H613.3V419H626.5V338.3H634V419H647.5V338.3H648.7V419H653V338.3H654V419H669.3V338.3H674.3V419H690.7V338.3H695.7V419H712.3V338.3H716.7V419H733.3V338.3H737.3V419H755.3V338.3H758V419H776.7V338.3H779V419H798.3V338.3H800V419H819.3V338.3H821.3V419H827"/>

<!-- digital DN / UP -->
<path class="grid" d="M432 428v22h1"/>
<path class="wr" d="M433 434H443.7"/>
<path class="wd" d="M443.7 431V436.7H827"/>
<path class="wsp" d="M465.3 436.7V431M486.7 436.7V431M507.7 436.7V431M529 436.7V431M549.7 436.7V431M570.7 436.7V431M591.3 436.7V431M612 436.7V431M632.3 436.7V431M654 436.7V431M675 436.7V431M696 436.7V431M716.7 436.7V431M736.7 436.7V431M758 436.7V431M779 436.7V431M800 436.7V431M821.3 436.7V431"/>
<path class="wd" d="M433 446V440.7H444V446H454.3V440.7H465.7V446H476V440.7H487.3V446H497.3V440.7H507.7V446H519.3V440.7H529.3V446H540V440.7H550V446H562V440.7H570.7V446H583.3V440.7H592V446H604.3V440.7H613.3V446H626.5V440.7H634V446H647.5V440.7H654V446H669.3V440.7H674.3V446H690.7V440.7H695.7V446H712.3V440.7H716.7V446H733.3V440.7H737.3V446H755.3V440.7H758V446H776.7V440.7H779V446H798.3V440.7H800V446H819.3V440.7H821.3V446H827"/>
<path class="plus" d="M480.7 319.5h2M481.7 318.5v2M529 319.5h2M530 318.5v2M577.7 319.5h2M578.7 318.5v2M626 319.5h2M627 318.5v2M674.5 319.5h2M675.5 318.5v2M724 319.5h2M725 318.5v2M772 319.5h2M773 318.5v2M820 319.5h2M821 318.5v2M480.7 433.5h2M481.7 432.5v2M529 433.5h2M530 432.5v2M577.7 433.5h2M578.7 432.5v2M626 433.5h2M627 432.5v2M674.5 433.5h2M675.5 432.5v2M724 433.5h2M725 432.5v2M772 433.5h2M773 432.5v2M820 433.5h2M821 432.5v2M480.7 443.5h2M481.7 442.5v2M529 443.5h2M530 442.5v2M577.7 443.5h2M578.7 442.5v2M626 443.5h2M627 442.5v2M674.5 443.5h2M675.5 442.5v2M724 443.5h2M725 442.5v2M772 443.5h2M773 442.5v2M820 443.5h2M821 442.5v2"/>

<!-- time axis -->
<path class="grid" d="M433 449.5H827"/>
<path class="dash" d="M433 451H827"/>
<g class="tx-t"><text x="433" y="458">0.0U</text><text x="481.7" y="458">0.5U</text><text x="530" y="458">1.0U</text><text x="578.7" y="458">1.5U</text><text x="627" y="458">2.0U</text><text x="675.5" y="458">2.5U</text><text x="725" y="458">3.0U</text><text x="773" y="458">3.5U</text><text x="821" y="458">4.0U</text></g>
<text class="tlab" x="617" y="463.5">Time (s)</text>

<!-- cursor -->
<path class="cur" d="M632.3 105V472"/>
<path class="ln-g" d="M632.3 130 637.3 121"/>
<path class="ln-y" d="M632.3 137 637.3 130"/>
<path class="ln-b" d="M632.3 224 637.3 225"/>
<path class="ln-y" d="M632.3 338.5 637.3 341"/>
<path class="ln-y" d="M632.3 316.5 637.3 319"/>
<path class="ln-g" d="M632.3 431 637.3 435"/>
<path class="ln-g" d="M632.3 441 637.3 445"/>
<rect class="box bg" x="637.5" y="117.7" width="26" height="7"/><text class="val" x="639" y="123.5">1.32936</text>
<rect class="box by" x="637.5" y="126.2" width="26" height="7"/><text class="val" x="639" y="132">1.15932</text>
<rect class="box bb" x="637.5" y="221" width="26" height="7"/><text class="val" x="639" y="226.8">2.44391</text>
<rect class="box bw" x="637.5" y="316.5" width="8.5" height="6.8"/><text class="val" x="640.5" y="322.2">'1'</text>
<rect class="box by" x="637.5" y="335.5" width="26.5" height="7"/><text class="val" x="639" y="341.3">2.49998</text>
<rect class="box bw" x="637.5" y="430.7" width="8.5" height="6.8"/><text class="val" x="640.5" y="436.4">'1'</text>
<rect class="box bw" x="637.5" y="440" width="8.5" height="6.8"/><text class="val" x="640.5" y="445.8">'1'</text>
<rect class="cbox" x="632.8" y="464" width="41" height="7.8"/><text class="cval" x="634.5" y="470.3">C1: 2.04979U</text>

<!-- legend -->
<rect class="vsep" x="827" y="92" width="1.5" height="380"/>
<rect x="830" y="113.3" width="3.4" height="5.2" fill="#6cb040"/><text class="lg" x="836" y="118">V( pll:xcp:iout)</text>
<rect x="830" y="120.3" width="3.4" height="5.2" fill="#e8e040"/><text class="lg" x="836" y="125">V( pll:yvco:(vin[</text>
<rect x="830" y="218" width="3.4" height="5.6" fill="#4070c0"/><text class="lg" x="836" y="223">V( pll:ref)</text>
<text class="lg" x="831" y="321">pll:ypfd:REF</text>
<rect x="830" y="333" width="3.4" height="5.6" fill="#e8e040"/><text class="lg" x="836" y="338">V( pll:up)</text>
<text class="lg" x="831" y="435.5">pll:ypfd:DN</text>
<text class="lg" x="831" y="445">pll:ypfd:UP</text>
</svg>
<div class="vsb"><i class="au"></i><i class="ad"></i></div>
</div>
<div class="hsrow"><div class="hsa"><i class="tr"></i><i class="btn">‹</i><i class="lav"></i><i class="tr2"></i><i class="btn">›</i></div><div class="hsb"><i class="btn">‹</i><i class="lav2"></i><i class="tr3"></i><i class="btn">›</i></div></div>
</div>
<div class="wstat"><span class="f1"></span><span class="f2"></span><span class="f3">11:48 AM</span></div>
<div class="tabs wtabs"><span class="tab on"><svg><use href="#page"/></svg>Contributor<b>×</b></span><span class="tab"><svg><use href="#waveic"/></svg>Wave<b>×</b></span></div>
</div>
<div class="rsb"></div>
</div>
</section>
</div>

<section class="trans">
<header class="thead"><svg class="pi"><use href="#page"/></svg><span>Transcript</span><i class="grip"></i></header>
<pre class="tbody"># 1 percent: (time = 4us).
# Dynamic memory 57.04MB and current CPU time=21.24 seconds (0h 0m 21s 239) (90.42%)
<span class="prompt">VASIM 8&gt;</span></pre>
</section>
<footer class="status"><span class="sl">Now: 5 us  Delta: 0  1.25%</span><span class="sr">Env: pll</span></footer>
</div>
</body>
</html>
```

FILE: styles.css
```css
* { box-sizing: border-box; }
html, body { margin: 0; padding: 0; background: #fff; }
body { width: 902px; height: 576px; overflow: hidden; font: 6.05px/8.5px "Liberation Sans", Arial, sans-serif; color: #333; }
.sprite { width: 0; height: 0; display: block; overflow: hidden; }
.screen { width: 902px; height: 576px; display: flex; flex-direction: column; background: #fff; filter: blur(.35px); }
.topgap { height: 4px; background: #fff; flex: none; }
i { display: block; font-style: normal; }

.title { height: 11px; flex: none; background: #2c6690; color: #e6eef4; display: flex; align-items: center; border-top: 1px solid #8aa6bc; }
.ti { width: 6px; height: 7px; }
.ttext { font-size: 8.5px; margin-left: 2px; letter-spacing: .06px; }
.wbtns { margin-left: auto; margin-right: 4px; display: flex; gap: 1px; }
.wbtns svg { width: 7px; height: 7px; display: block; }

.menu { height: 13px; flex: none; display: flex; align-items: center; gap: 6px; padding-right: 5px; background: #e0e0e0; border-top: 1px solid #bbb; color: #333; font-size: 5.9px; }
.menu .bold { font-weight: 700; color: #222; }
.menu .push { margin-left: auto; }

.toolbar { height: 15px; flex: none; display: flex; align-items: center; gap: 2.2px; padding-left: 4px; background: #e0e0e0; border-top: 1px solid #c4c4c4; border-bottom: 1px solid #b8b8b8; }
.tb { width: 9px; height: 9px; flex: none; }
.g1 { margin-left: 1px; }
.m3 { margin-left: 3px; }
.drop { width: 3px; height: 0; margin: 0 1px 0 -1px; border-left: 1.5px solid transparent; border-right: 1.5px solid transparent; border-top: 2px solid #333; flex: none; }
.sep { height: 11px; margin: 0 1.3px; background: #b0b0b0; border-right: 1px solid #f4f4f4; width: 2px; flex: none; }
.sep.s2 { margin-left: -.5px; }
.sep.s3 { margin: 0 2.2px; }
.num { width: 25px; height: 9px; background: #fff; text-align: right; line-height: 9px; color: #444; border-top: 1px solid #bbb; font-size: 5.8px; padding-right: 1px; flex: none; }
.spin { width: 5px; height: 8px; margin-left: -1px; background: #ccc; border-top: 1px solid #eee; border-bottom: 1px solid #777; flex: none; }
.lay { color: #333; flex: none; }
.combo { width: 68px; height: 10px; background: #d4d4d4; border: 1px solid #a8a8a8; font: 6.3px/8px "Liberation Mono", monospace; color: #333; display: flex; justify-content: space-between; padding-left: 1px; flex: none; }
.cbtn { width: 8px; height: 8px; background: #e0e0e0; border-left: 1px solid #999; }
.cbtn::after { content: ""; display: block; margin: 2px auto 0; width: 0; height: 0; border-left: 2.5px solid transparent; border-right: 2.5px solid transparent; border-top: 3.5px solid #111; }
.chk { width: 5px; height: 5px; background: #eee; border: 1px solid #999; margin-left: 5px; flex: none; }
.dl { color: #333; flex: none; margin-left: -1px; }
.dfield { width: 69px; height: 9px; line-height: 8px; background: #d8d8d8; border: 1px solid #aaa; color: #999; padding-left: 1px; font-size: 5.8px; flex: none; margin-left: 1px; }

.main { height: 475px; flex: none; display: flex; background: #dcdcdc; }
.struct { width: 198px; flex: none; display: flex; flex-direction: column; padding-bottom: 3.5px; }
.objs { width: 194px; margin-left: 3px; flex: none; display: flex; flex-direction: column; }
.wavecol { width: 504px; margin-left: 3px; flex: none; display: flex; flex-direction: column; }

.phead { height: 10px; flex: none; display: flex; align-items: center; gap: 2px; padding: 1px 2px 0 0; color: #333; background: #dcdcdc; white-space: nowrap; }
.wavecol > .phead { padding-right: 7px; }
.phead.active { background: #4e5c9c; color: #e8ecf8; }
.pi { width: 7px; height: 7px; flex: none; }
.grip { flex: 1; height: 4px; margin: 0 2px; border-top: 1px solid #aaa; border-bottom: 1px solid #aaa; }
.active .grip { border-color: #98a4d8; }
.pbtn { display: flex; gap: 1px; }
.pbtn svg { width: 6px; height: 6px; display: block; }

.cols { height: 9px; flex: none; display: flex; background: #dcdcdc; color: #333; line-height: 9px; border-bottom: 1px solid #b4b4b4; }
.c1 { width: 79px; padding-left: 5px; border-right: 1px solid #bbb; }
.c2 { width: 39px; padding-left: 1px; border-right: 1px solid #bbb; }
.c3 { width: 52px; padding-left: 1px; border-right: 1px solid #bbb; }
.c4 { padding-left: 1px; }
.tree { flex: 1; background: #fff; padding-top: .5px; overflow: hidden; }
.hs { height: 7px; flex: none; display: flex; background: #dcdcdc; }
.sa { width: 4px; background: #d0d0d0; }
.st { width: 82px; background: #d8d8d8; }
.sth { width: 102px; background: #a9a9a9; }
.st2 { width: 6px; background: #d8d8d8; }
.tabs { height: 10px; flex: none; margin-top: 1px; display: flex; align-items: stretch; background: #dcdcdc; color: #444; }
.tab { display: flex; align-items: center; gap: 1px; padding: 0 2px 0 1px; }
.tab svg { width: 7px; height: 8px; }
.tab b { font-weight: 400; color: #999; margin-left: 2px; }
.tab.on { border: 1px solid #999; border-top: 0; background: #e4e4e4; }
.tabfill { flex: 1; border-top: 1px solid #999; }
.tarrow { width: 5px; margin: 1px 0 1px 1px; background: #eee; border: 1px solid #aaa; }

.r { display: flex; height: 8.5px; line-height: 8.5px; color: #333; white-space: nowrap; }
.r.sel { background: #e4e4e4; }
.n { width: 81px; margin-left: -2px; display: flex; flex: none; overflow: hidden; }
.u { width: 39px; margin-left: 1px; flex: none; overflow: hidden; }
.t { flex: none; }
.tx { margin-left: 1.5px; }
.ic { width: 8.5px; height: 8.5px; flex: none; }
.n .g, .n .e, .n .x, .n .b, .n .e0 { width: 8.5px; height: 8.5px; flex: none; }
.n .g { background: linear-gradient(#c4c4c4, #c4c4c4) 4px 0 / 1px 100% no-repeat; }
.n .e, .n .e0 { background: linear-gradient(#c4c4c4, #c4c4c4) 4px 0 / 1px 50% no-repeat, linear-gradient(#c4c4c4, #c4c4c4) 4px 4px / 100% 1px no-repeat; }
.n .x { background: linear-gradient(#c4c4c4, #c4c4c4) 4px 0 / 1px 100% no-repeat; padding: 1.5px 0 0 1.5px; }
.n .x::before { content: ""; display: block; width: 5.5px; height: 5.5px; border: 1px solid #a6aec8; background: linear-gradient(#667, #667) 50% 50% / 3px 1px no-repeat, #f2f2fa; }

.o1 { width: 83px; padding-left: 6px; border-right: 1px solid #bbb; }
.o2 { width: 57px; padding-left: 1px; border-right: 1px solid #bbb; }
.o3 { padding-left: 1px; }
.olist { height: 310px; flex: none; background: #505c90; color: #e4e8f4; padding-top: .5px; overflow: hidden; }
.o { display: flex; height: 8.5px; line-height: 8.5px; white-space: nowrap; }
.o.sel { background: #e4e4e4; color: #333; }
.on { width: 82px; padding-left: .5px; display: flex; flex: none; overflow: hidden; }
.ov { width: 58px; flex: none; }
.bk, .xo, .eo { width: 8.5px; height: 8.5px; flex: none; }
.xo { padding: 1.5px 0 0 1.5px; }
.xo::before { content: ""; display: block; width: 5.5px; height: 5.5px; border: 1px solid #888; background: linear-gradient(#223, #223) 50% 50% / 3px 1px no-repeat, #eee; }
.eo { background: linear-gradient(#aab, #aab) 4px 0 / 1px 50% no-repeat, linear-gradient(#aab, #aab) 4px 4px / 100% 1px no-repeat; }
.pr { margin-top: 2px; border-top: 1px solid #aaa; }
.proc { flex: 1; background: #8f9ecb; margin-bottom: 4px; }

.wbody { flex: 1; display: flex; min-height: 0; }
.wleft { width: 492px; flex: none; display: flex; flex-direction: column; }
.rsb { width: 10px; margin-left: 2px; background: #e8e8e8; border-left: 1px solid #aaa; border-right: 1px solid #bbb; margin-bottom: 2px; }
.wm { height: 9px; border-top: 0; padding-left: 5px; gap: 6px; padding-right: 2px; }
.wt { height: 14px; border-top: 0; border-bottom: 0; padding-left: 4px; gap: 2.35px; }
.wt .sep { margin: 0 -.8px; }

.sub { width: 484px; height: 415px; margin-left: 6px; flex: none; display: flex; flex-direction: column; background: #dedede; border: 1px solid #7b7fc4; border-width: 2px 1px; padding-top: 3px; }
.subtitle { height: 11px; flex: none; display: flex; align-items: center; gap: 2px; background: #c9ccec; color: #222; padding-left: 2px; font-size: 6.8px; }
.si { width: 8px; height: 8px; }
.sbtn { margin-left: auto; margin-right: 3px; display: flex; gap: 2px; }
.sbtn svg { width: 6px; height: 6px; display: block; }
.sbtn .sbx { margin-left: 4px; }
.plotrow { height: 380px; flex: none; display: flex; }
.plot { width: 474px; height: 380px; display: block; flex: none; }
.vsb { width: 8px; flex: none; background: #c8c8c8; display: flex; flex-direction: column; justify-content: space-between; padding: 12px 0 23px; }
.vsb i { height: 6px; background: #e4e4e4; }
.vsb .au::after, .vsb .ad::after { content: ""; display: block; margin: 2px auto; width: 0; height: 0; border-left: 2px solid transparent; border-right: 2px solid transparent; }
.vsb .au::after { border-bottom: 2px solid #111; }
.vsb .ad::after { border-top: 2px solid #111; }
.hsrow { height: 8px; flex: none; display: flex; }
.hsa { width: 423px; display: flex; }
.hsb { width: 51px; display: flex; background: #fff; }
.hsrow i { height: 8px; }
.hsrow .btn { width: 6px; background: #ddd; text-align: center; line-height: 7px; font-size: 6px; color: #333; }
.tr { width: 29px; background: #dcdcdc; }
.lav { width: 304px; background: #a8abd8; }
.tr2 { width: 78px; background: #dcdcdc; }
.lav2 { width: 23px; background: #a8abd8; }
.tr3 { width: 16px; background: #d8d8d8; }

.wstat { height: 10px; margin-top: 1.5px; flex: none; display: flex; gap: 1px; }
.wstat span { display: block; height: 9px; border: 1px solid #aaa; border-right-color: #f4f4f4; border-bottom-color: #f4f4f4; }
.f1 { width: 370px; }
.f2 { width: 92px; }
.f3 { width: 28px; color: #444; font-size: 5.9px; line-height: 7px; text-align: center; background: #eee; white-space: nowrap; }
.wtabs { height: 10px; margin-top: 1px; }
.wtabs .tab { margin-right: 2px; }

.trans { height: 39px; flex: none; display: flex; flex-direction: column; background: #fff; }
.thead { height: 9px; flex: none; display: flex; align-items: center; gap: 2px; background: #dcdcdc; color: #333; }
.tbody { margin: 0; padding: 1.5px 0 0 0; font: 5.6px/6.3px "Liberation Mono", "Courier New", monospace; color: #222; white-space: pre-wrap; flex: 1; }
.prompt { display: block; margin-top: 6.3px; font-family: "Liberation Sans", Arial, sans-serif; color: #7a7ac0; font-size: 5.8px; }
.status { height: 13px; flex: none; display: flex; align-items: center; background: #dcdcdc; border-bottom: 1px solid #555; color: #333; white-space: pre; font-size: 6.05px; }
.sl { width: 109px; }
.sr { border-left: 1px solid #999; padding-left: 2px; height: 11px; line-height: 11px; }

.plot text { font-family: "Liberation Sans", Arial, sans-serif; }
.db { fill: #c0c0c0; font-size: 6px; }
.grid { stroke: #555; stroke-width: 1; fill: none; }
.gridb { stroke: #444; stroke-width: 1.5; fill: none; }
.dash { stroke: #777; stroke-width: 2; stroke-dasharray: 1 8.7; fill: none; }
.tick { stroke: #777; stroke-width: .8; fill: none; }
.tk text { fill: #bdbdbd; font-size: 5.4px; text-anchor: end; }
.ey { fill: #9c6430; font-size: 6.4px; text-anchor: middle; }
.wg { fill: none; stroke: #5ea03c; stroke-width: .9; }
.wy { fill: none; stroke: #b8b82e; stroke-width: 1; }
.wb { fill: none; stroke: #34609e; stroke-width: .8; }
.wd { fill: none; stroke: #4f9a3c; stroke-width: 1; }
.wy2 { fill: none; stroke: #aca830; stroke-width: 1; }
.wr { fill: none; stroke: #8a2a20; stroke-width: 1; }
.wsp { fill: none; stroke: #8fd070; stroke-width: 1; }
.plus { fill: none; stroke: #aaa; stroke-width: .6; }
.tx-t text { fill: #c4c4c4; font-size: 5.4px; text-anchor: middle; }
.tlab { fill: #9c6430; font-size: 7px; }
.cur { stroke: #e6c98e; stroke-width: 1; fill: none; }
.ln-g { stroke: #5ea03c; stroke-width: .5; fill: none; }
.ln-y { stroke: #b8b82e; stroke-width: .5; fill: none; }
.ln-b { stroke: #3f6cb0; stroke-width: .5; fill: none; }
.box { fill: #0c0c00; stroke-width: .8; }
.bg { stroke: #5a8a3c; }
.by { stroke: #a8a030; }
.bb { stroke: #30527c; }
.bw { stroke: #a89a78; }
.val { fill: #dede90; font-size: 5.8px; letter-spacing: .15px; }
.cbox { fill: #000; stroke: #c8a878; stroke-width: .8; }
.cval { fill: #ddd; font-size: 5.9px; letter-spacing: .1px; }
.vsep { fill: #bbb; }
.lg { fill: #cfcfcf; font-size: 5.9px; }
```
